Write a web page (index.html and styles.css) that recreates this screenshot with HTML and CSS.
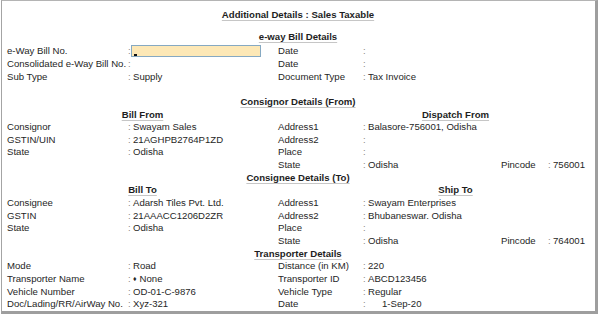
FILE: index.html
```html
<!DOCTYPE html>
<html lang="en">
<head>
    <meta charset="UTF-8">
    <title>Additional Details : Sales Taxable</title>
    <link rel="stylesheet" href="styles.css">
</head>
<body>

<div class="panel">
    <div class="title"><span>Additional Details : Sales Taxable</span></div>

    <div class="heading first"><span>e-way Bill Details</span></div>
    <div class="fields">
        <div class="lbl">e-Way Bill No.</div>
        <div class="val"><span class="colon">:</span><span class="input"><i class="caret"></i></span></div>
        <div class="lbl">Date</div>
        <div class="val"><span class="colon">:</span></div>

        <div class="lbl">Consolidated e-Way Bill No.</div>
        <div class="val"><span class="colon">:</span></div>
        <div class="lbl">Date</div>
        <div class="val"><span class="colon">:</span></div>

        <div class="lbl">Sub Type</div>
        <div class="val"><span class="colon">:</span>Supply</div>
        <div class="lbl">Document Type</div>
        <div class="val"><span class="colon">:</span>Tax Invoice</div>
    </div>

    <!-- Consignor -->
    <div class="heading gap"><span>Consignor Details (From)</span></div>
    <div class="sub">
        <div><span>Bill From</span></div>
        <div class="right"><span>Dispatch From</span></div>
    </div>
    <div class="fields">
        <div class="lbl">Consignor</div>
        <div class="val"><span class="colon">:</span>Swayam Sales</div>
        <div class="lbl">Address1</div>
        <div class="val"><span class="colon">:</span>Balasore-756001, Odisha</div>

        <div class="lbl">GSTIN/UIN</div>
        <div class="val"><span class="colon">:</span>21AGHPB2764P1ZD</div>
        <div class="lbl">Address2</div>
        <div class="val"><span class="colon">:</span></div>

        <div class="lbl">State</div>
        <div class="val"><span class="colon">:</span>Odisha</div>
        <div class="lbl">Place</div>
        <div class="val"><span class="colon">:</span></div>

        <div class="lbl"></div>
        <div class="val"></div>
        <div class="lbl">State</div>
        <div class="val pin-row">
            <div><span class="colon">:</span>Odisha</div>
            <div>Pincode</div>
            <div><span class="colon">:</span>756001</div>
        </div>
    </div>

    <!-- Consignee -->
    <div class="heading"><span>Consignee Details (To)</span></div>
    <div class="sub">
        <div><span>Bill To</span></div>
        <div class="right"><span>Ship To</span></div>
    </div>
    <div class="fields">
        <div class="lbl">Consignee</div>
        <div class="val"><span class="colon">:</span>Adarsh Tiles Pvt. Ltd.</div>
        <div class="lbl">Address1</div>
        <div class="val"><span class="colon">:</span>Swayam Enterprises</div>

        <div class="lbl">GSTIN</div>
        <div class="val"><span class="colon">:</span>21AAACC1206D2ZR</div>
        <div class="lbl">Address2</div>
        <div class="val"><span class="colon">:</span>Bhubaneswar. Odisha</div>

        <div class="lbl">State</div>
        <div class="val"><span class="colon">:</span>Odisha</div>
        <div class="lbl">Place</div>
        <div class="val"><span class="colon">:</span></div>

        <div class="lbl"></div>
        <div class="val"></div>
        <div class="lbl">State</div>
        <div class="val pin-row">
            <div><span class="colon">:</span>Odisha</div>
            <div>Pincode</div>
            <div><span class="colon">:</span>764001</div>
        </div>
    </div>

    <!-- Transporter -->
    <div class="heading"><span>Transporter Details</span></div>
    <div class="fields">
        <div class="lbl">Mode</div>
        <div class="val"><span class="colon">:</span>Road</div>
        <div class="lbl">Distance (in KM)</div>
        <div class="val"><span class="colon">:</span>220</div>

        <div class="lbl">Transporter Name</div>
        <div class="val"><span class="colon">:</span><span class="bullet">&#9830;</span>None</div>
        <div class="lbl">Transporter ID</div>
        <div class="val"><span class="colon">:</span>ABCD123456</div>

        <div class="lbl">Vehicle Number</div>
        <div class="val"><span class="colon">:</span>OD-01-C-9876</div>
        <div class="lbl">Vehicle Type</div>
        <div class="val"><span class="colon">:</span>Regular</div>

        <div class="lbl">Doc/Lading/RR/AirWay No.</div>
        <div class="val"><span class="colon">:</span>Xyz-321</div>
        <div class="lbl">Date</div>
        <div class="val"><span class="colon">:</span><span class="date">1-Sep-20</span></div>
    </div>
</div>

</body>
</html>
```

FILE: styles.css
```css
body {
    margin: 0;
    background-color: #fff;
    font-family: "Liberation Sans", Arial, sans-serif;
    font-size: 9.6px;
    color: #262626;
}

.panel {
    margin-left: 1px;
    width: 588px;
    height: 302px;
    padding: 8px 0 0 5px;
    border-top: 1px solid #b4b4b4;
    border-left: 1px solid #a4a4a4;
    border-right: 3px solid #9e9e9e;
    border-bottom: 3px solid #9e9e9e;
    line-height: 12.65px;
    overflow: hidden;
}

.title,
.heading {
    text-align: center;
    padding-right: 6px;
    font-weight: bold;
    color: #1e1e1e;
}

.title {
    margin-bottom: 9px;
}

.heading.first {
    margin-bottom: 2px;
}

.heading.gap {
    margin-top: 12.65px;
}

.title span,
.heading span,
.sub span {
    text-decoration: underline;
    text-decoration-color: #c6c6c6;
    text-underline-offset: 2px;
}

.sub {
    display: grid;
    grid-template-columns: 271px 1fr;
    font-weight: bold;
    color: #1e1e1e;
    text-align: center;
}

.sub .right {
    padding-left: 38px;
}

.fields {
    display: grid;
    grid-template-columns: 121px 150px 85px 1fr;
    grid-auto-rows: 12.65px;
}

.val {
    white-space: nowrap;
}

.colon {
    display: inline-block;
    width: 5px;
    color: #8a8a8a;
}

.input {
    position: relative;
    display: inline-block;
    vertical-align: top;
    width: 128px;
    height: 10px;
    margin-left: -2px;
    border: 1px solid #86a9c2;
    background-color: #fde8b6;
}

.caret {
    position: absolute;
    left: 2px;
    bottom: 0;
    width: 3px;
    height: 2px;
    background-color: #111;
}

.pin-row {
    display: grid;
    grid-template-columns: 138px 47px 1fr;
}

.bullet {
    font-size: 7px;
    margin-right: 3px;
    vertical-align: 1px;
}

.date {
    padding-left: 14px;
}
```
